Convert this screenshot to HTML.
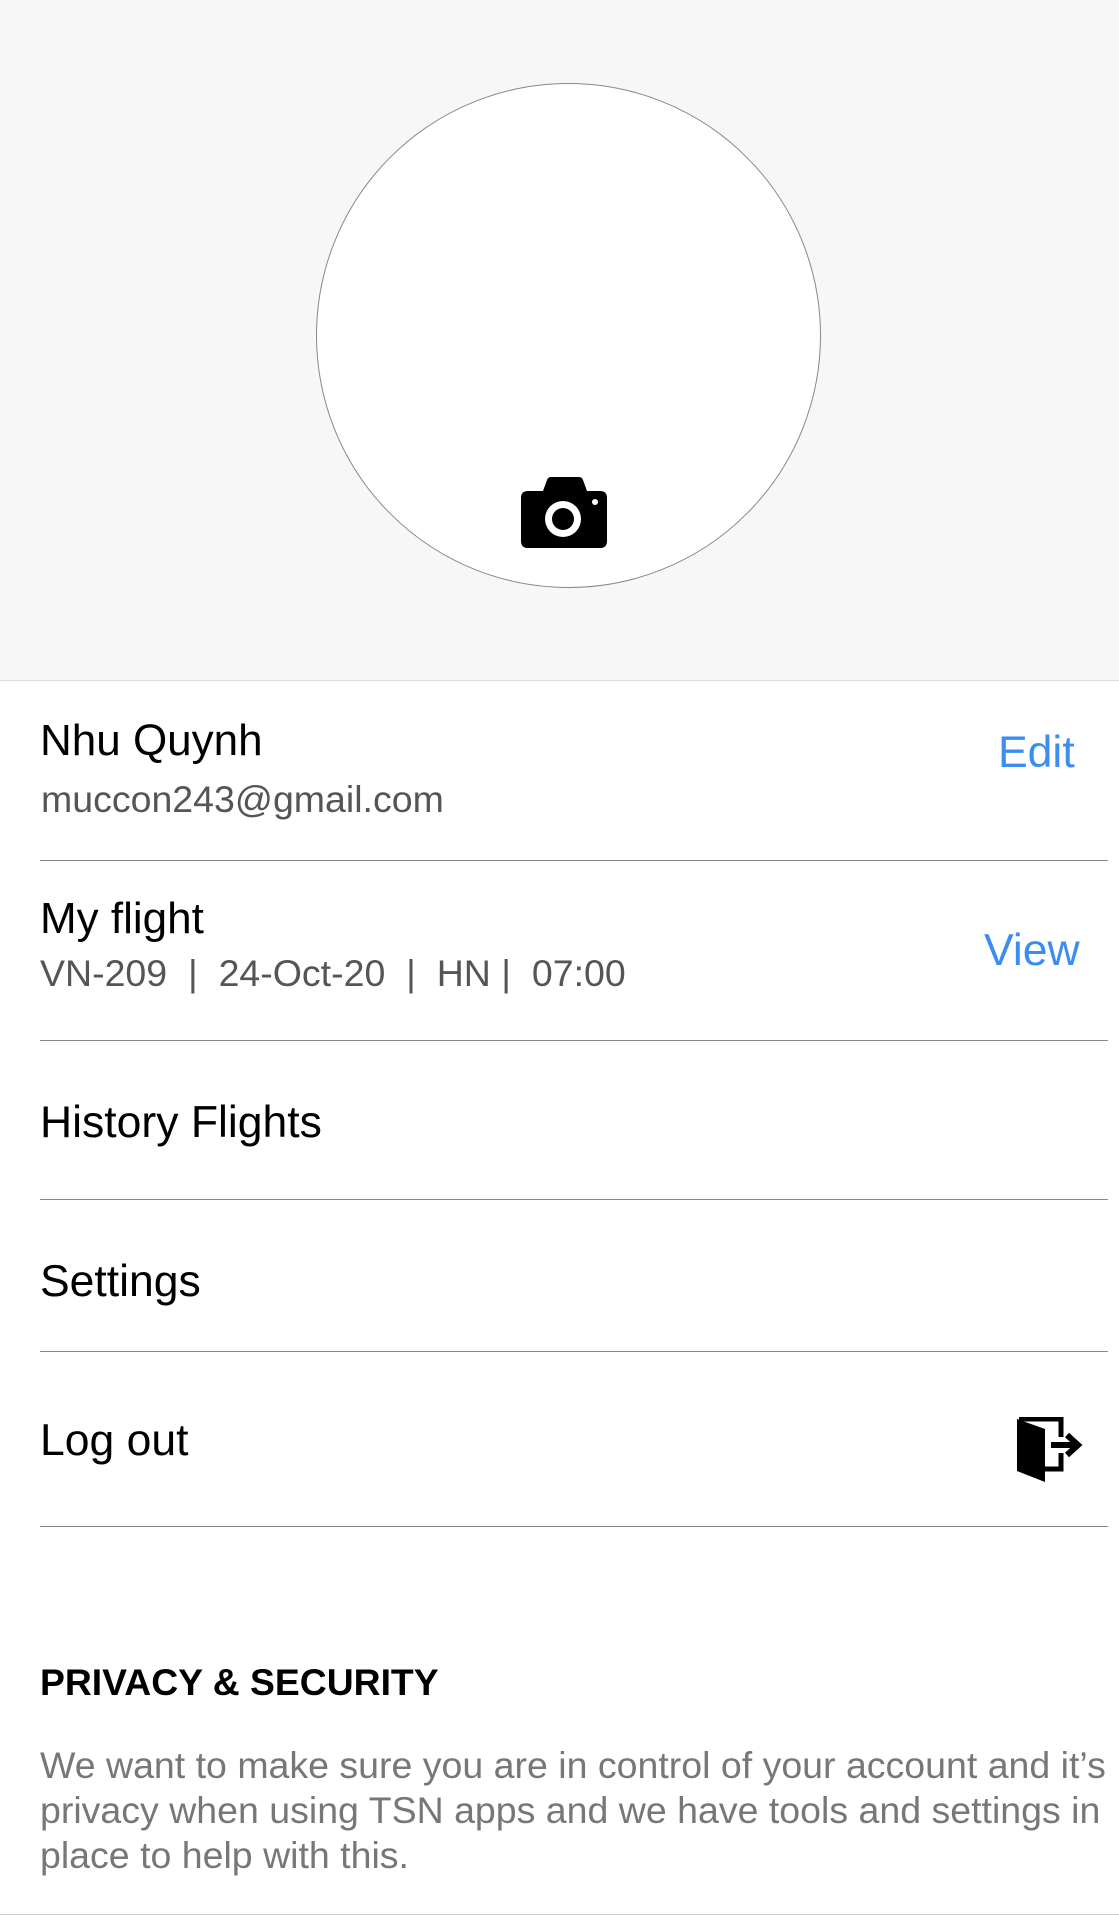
<!DOCTYPE html>
<html><head><meta charset="utf-8"><style>
body{margin:0;width:1119px;height:1918px;background:#fff;font-family:"Liberation Sans",Arial,sans-serif;position:relative;overflow:hidden}
.hdr{position:absolute;left:0;top:0;width:1119px;height:680px;background:#f7f7f7;border-bottom:1px solid #ddd}
.circ{position:absolute;left:316px;top:83px;width:505px;height:505px;border-radius:50%;background:#fff;border:1px solid #888;box-sizing:border-box}
.t{position:absolute;left:40px;white-space:nowrap;color:#000}
.line{position:absolute;left:40px;width:1068px;height:1px;background:#888}
.g{color:#555}
.b{color:#3b8ef0;position:absolute;font-size:44.5px}
</style></head><body>
<div class="hdr"></div>
<div class="circ"></div>
<svg style="position:absolute;left:520px;top:477px" width="88" height="72" viewBox="0 0 88 72">
<path d="M23 14 L27 3 Q28 0 31 0 L59 0 Q62 0 63 3 L67 14 L80 14 Q87 14 87 21 L87 64 Q87 71 80 71 L8 71 Q1 71 1 64 L1 21 Q1 14 8 14 Z" fill="#000"/>
<circle cx="43" cy="42" r="18" fill="#fff"/><circle cx="43" cy="42" r="11" fill="#000"/><circle cx="75" cy="25" r="3" fill="#fff"/>
</svg>
<div class="t" style="top:716px;font-size:44px">Nhu Quynh</div>
<div class="t g" style="top:778px;font-size:37.5px;left:41px">muccon243@gmail.com</div>
<div class="b" style="left:998px;top:728px">Edit</div>
<div class="line" style="top:860px"></div>
<div class="t" style="top:894px;font-size:44px">My flight</div>
<div class="t g" style="top:952px;font-size:37.5px">VN-209 &nbsp;| &nbsp;24-Oct-20 &nbsp;| &nbsp;HN | &nbsp;07:00</div>
<div class="b" style="left:984px;top:926px">View</div>
<div class="line" style="top:1040px"></div>
<div class="t" style="top:1098px;font-size:44.5px">History Flights</div>
<div class="line" style="top:1199px"></div>
<div class="t" style="top:1257px;font-size:44.5px">Settings</div>
<div class="line" style="top:1351px"></div>
<div class="t" style="top:1416px;font-size:44.5px">Log out</div>
<svg style="position:absolute;left:1017px;top:1417px" width="68" height="66" viewBox="0 0 68 66">
<path d="M0 2 L0 54 L28 65 L28 12 Z" fill="#000"/>
<path d="M2 2 L44 2 L44 20 M44 36 L44 52 L28 52" fill="none" stroke="#000" stroke-width="5"/>
<path d="M34 28 L60 28 M50 18 L61 28 L50 38" fill="none" stroke="#000" stroke-width="6"/>
</svg>
<div class="line" style="top:1526px"></div>
<div class="t" style="top:1661px;font-size:37.3px;font-weight:bold">PRIVACY &amp; SECURITY</div>
<div class="t" style="top:1743px;font-size:37.5px;line-height:45px;color:#777">We want to make sure you are in control of your account and it’s<br>privacy when using TSN apps and we have tools and settings in<br>place to help with this.</div>
<div style="position:absolute;left:0;top:1914px;width:1119px;height:1px;background:#ccc"></div>
</body></html>
